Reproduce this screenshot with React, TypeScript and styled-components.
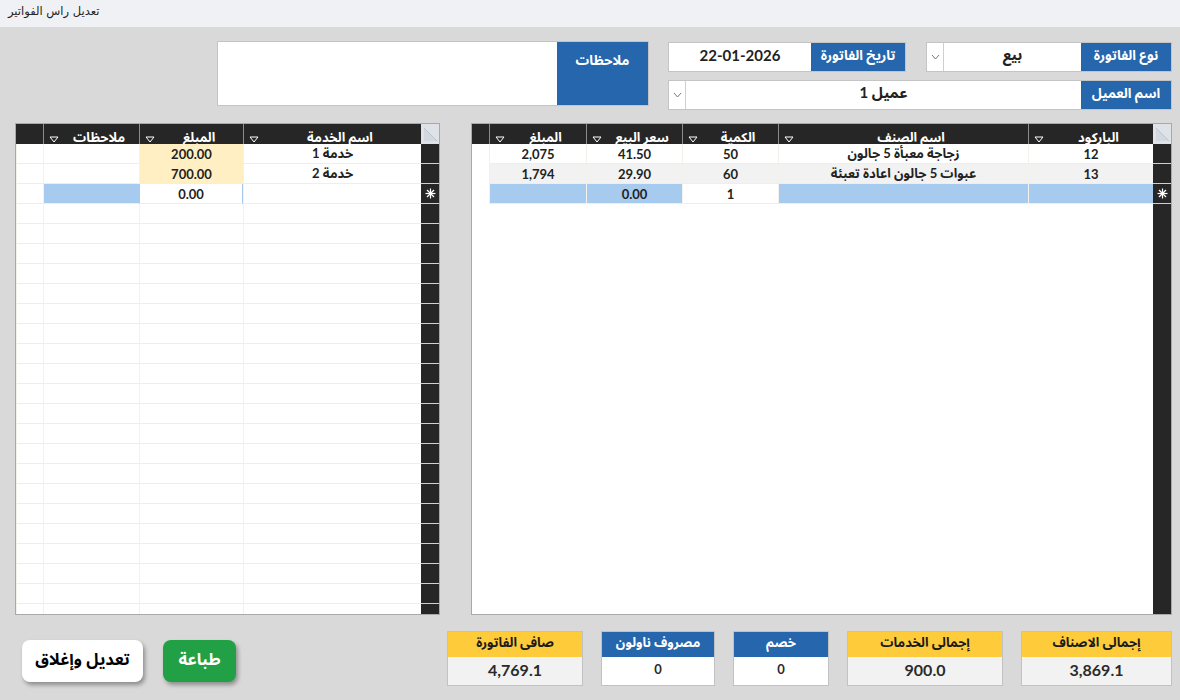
import React from "react";
import styled, { createGlobalStyle } from "styled-components";

const GlobalStyle = createGlobalStyle`
  html, body {
    margin: 0;
    padding: 0;
    background: #d9d9d9;
  }
  body {
    font-family: Lato, "Noto Sans Arabic", "DejaVu Sans", sans-serif;
  }
  * {
    box-sizing: border-box;
  }
`;

const BLUE = "#2566ad";
const YELLOW = "#fecb3b";
const ROW_BLUE = "#a6cbee";
const DARK = "#262626";

// ---------- layout ----------
const Screen = styled.div`
  width: 1180px;
  height: 700px;
  background: #d9d9d9;
  overflow: hidden;
  display: flex;
  flex-direction: column;
`;

const TitleBar = styled.div`
  height: 27px;
  flex: none;
  background: #f0f1f5;
  padding: 4px 8px 0;
  font-family: "DejaVu Sans", sans-serif;
  font-size: 11.5px;
  color: #222;
  direction: ltr;
`;

const Body = styled.div`
  direction: rtl;
  flex: 1;
  display: flex;
  flex-direction: column;
  padding: 14px 8px 0 15px;
`;

const TopSection = styled.div`
  display: flex;
  gap: 19px;
  align-items: flex-start;
  height: 68px;
`;

const FieldsColumn = styled.div`
  width: 504px;
  margin-top: 1px;
  display: flex;
  flex-direction: column;
  gap: 8px;
`;

const FieldRow = styled.div`
  display: flex;
  gap: 20px;
`;

const FieldGroup = styled.div<{ $w?: number; $h?: number }>`
  display: flex;
  width: ${(p) => (p.$w ? `${p.$w}px` : "100%")};
  height: ${(p) => p.$h ?? 30}px;
  border: 1px solid #c4c4c4;
  background: #fff;
`;

const FieldLabel = styled.div<{ $w: number; $top?: boolean }>`
  width: ${(p) => p.$w}px;
  flex: none;
  background: ${BLUE};
  color: #fff;
  font-weight: 700;
  font-size: 13.5px;
  display: flex;
  justify-content: center;
  align-items: ${(p) => (p.$top ? "flex-start" : "center")};
  padding-top: ${(p) => (p.$top ? "4px" : "0")};
  padding-bottom: ${(p) => (p.$top ? "0" : "3px")};
`;

const FieldValue = styled.div`
  flex: 1;
  display: flex;
  justify-content: center;
  align-items: center;
  padding-bottom: 5px;
  font-weight: 700;
  font-size: 15px;
  color: #222;
`;

const ArrowBox = styled.div`
  width: 17px;
  flex: none;
  border-right: 1px solid #cfcfcf;
  display: flex;
  align-items: center;
  justify-content: center;
`;

const NotesArea = styled.div`
  flex: 1;
  background: #fff;
`;

// ---------- tables ----------
const TablesSection = styled.div`
  display: flex;
  gap: 31px;
  height: 492px;
  margin-top: 14px;
`;

const TableFrame = styled.div<{ $w: number }>`
  width: ${(p) => p.$w}px;
  height: 100%;
  border: 1px solid #a9a9a9;
  background: #fff;
  display: flex;
  flex-direction: column;
  overflow: hidden;
`;

const HeadRow = styled.div`
  display: flex;
  height: 20px;
  flex: none;
  background: ${DARK};
`;

const Corner = styled.div`
  width: 18px;
  flex: none;
  background: #dfe3e8;
  display: flex;
  align-items: center;
  justify-content: center;
`;

const Grid = styled.div<{ $cols: string }>`
  display: grid;
  grid-template-columns: ${(p) => p.$cols};
`;

const HeadGrid = styled(Grid)`
  flex: 1;
`;

const RowGrid = styled(Grid)`
  flex: none;
  height: 20px;
`;

const HeadCell = styled.div`
  display: flex;
  align-items: center;
  padding-left: 5px;
  border-left: 1px solid #8c8c8c;
  color: #fff;
  font-weight: 700;
  font-size: 13px;
  span {
    flex: 1;
    text-align: center;
    padding-bottom: 2px;
  }
`;

const TableBody = styled.div`
  flex: 1;
  display: flex;
  min-height: 0;
`;

const SelectorCol = styled.div`
  width: 18px;
  flex: none;
  background: ${DARK};
  display: flex;
  flex-direction: column;
`;

const SelectorCell = styled.div`
  height: 20px;
  flex: none;
  border-bottom: 1px solid #d0d0d0;
  display: flex;
  align-items: center;
  justify-content: center;
`;

const Rows = styled.div`
  flex: 1;
  display: flex;
  flex-direction: column;
`;

const Cell = styled.div<{ $bg?: string; $plain?: boolean; $edge?: string }>`
  height: 20px;
  background: ${(p) => p.$bg ?? "#fff"};
  border-bottom: 1px solid ${(p) => (p.$plain ? "transparent" : "#efeee7")};
  border-left: 1px solid ${(p) => (p.$plain ? "transparent" : p.$edge ?? "#f2f1ec")};
  border-right: ${(p) => (p.$edge ? `1px solid ${p.$edge}` : "none")};
  display: flex;
  align-items: center;
  justify-content: center;
  font-weight: 700;
  font-size: 13px;
  color: #222;
  padding-top: 1px;
  white-space: nowrap;
  overflow: hidden;
`;

// ---------- bottom ----------
const BottomSection = styled.div`
  display: flex;
  justify-content: space-between;
  align-items: flex-start;
  margin-top: 16px;
`;

const Summary = styled.div`
  display: flex;
  gap: 18px;
`;

const SumBox = styled.div<{ $w: number }>`
  width: ${(p) => p.$w}px;
  border: 1px solid #c2c2c2;
  display: flex;
  flex-direction: column;
`;

const SumHead = styled.div<{ $blue?: boolean }>`
  height: 25px;
  background: ${(p) => (p.$blue ? BLUE : YELLOW)};
  color: ${(p) => (p.$blue ? "#fff" : "#1a1a1a")};
  font-weight: 700;
  font-size: 13px;
  display: flex;
  align-items: center;
  justify-content: center;
  padding-bottom: 3px;
`;

const SumValue = styled.div<{ $blue?: boolean }>`
  height: 28px;
  background: ${(p) => (p.$blue ? "#fff" : "#f2f2f2")};
  color: #2a2a2a;
  font-weight: 700;
  font-size: ${(p) => (p.$blue ? 13 : 16)}px;
  display: flex;
  align-items: ${(p) => (p.$blue ? "flex-start" : "center")};
  padding-top: ${(p) => (p.$blue ? "4px" : "0")};
  padding-bottom: ${(p) => (p.$blue ? "0" : "3px")};
  justify-content: center;
`;

const Buttons = styled.div`
  display: flex;
  gap: 20px;
  margin-top: 9px;
  margin-left: 7px;
`;

const ActionButton = styled.button<{ $green?: boolean; $w: number }>`
  width: ${(p) => p.$w}px;
  height: 42px;
  border: none;
  border-radius: 8px;
  background: ${(p) => (p.$green ? "#22a045" : "#fff")};
  color: ${(p) => (p.$green ? "#fff" : "#000")};
  box-shadow: 2px 3px 4px rgba(0, 0, 0, 0.35);
  font-family: "Noto Sans Arabic", "DejaVu Sans", sans-serif;
  font-weight: 700;
  font-size: 16.5px;
  padding: 0 0 3px;
  cursor: pointer;
`;

// ---------- icons ----------
const Chevron = () => (
  <svg width="9" height="6" viewBox="0 0 9 6">
    <polyline points="1,1 4.5,5 8,1" fill="none" stroke="#777" strokeWidth="1" />
  </svg>
);

const FilterArrow = () => (
  <svg width="10" height="7" viewBox="0 0 10 7">
    <polygon points="1,1 9,1 5,6" fill="none" stroke="#fff" strokeWidth="1" />
  </svg>
);

const CornerMark = () => (
  <svg width="16" height="16" viewBox="0 0 16 16">
    <polygon points="2,2 15,15 2,15" fill="#d2d8e0" />
    <line x1="2" y1="2" x2="15" y2="15" stroke="#bcc6d2" strokeWidth="1" />
  </svg>
);

const Star = () => (
  <svg width="11" height="11" viewBox="0 0 11 11">
    <g stroke="#fff" strokeWidth="1.2">
      <line x1="5.5" y1="0.5" x2="5.5" y2="10.5" />
      <line x1="0.5" y1="5.5" x2="10.5" y2="5.5" />
      <line x1="2" y1="2" x2="9" y2="9" />
      <line x1="9" y1="2" x2="2" y2="9" />
    </g>
  </svg>
);

// ---------- data ----------
const ITEM_COLS = "125px 250px 96px 96px 97px 1fr";
const SERVICE_COLS = "178px 104px 96px 1fr";

const itemHeads = ["الباركود", "اسم الصنف", "الكمية", "سعر البيع", "المبلغ"];
const serviceHeads = ["اسم الخدمة", "المبلغ", "ملاحظات"];

const items = [
  { code: "12", name: "زجاجة معبأة 5 جالون", qty: "50", price: "41.50", amount: "2,075" },
  { code: "13", name: "عبوات 5 جالون اعادة تعبئة", qty: "60", price: "29.90", amount: "1,794" },
];

const services = [
  { name: "خدمة 1", amount: "200.00" },
  { name: "خدمة 2", amount: "700.00" },
];

const totals = [
  { label: "إجمالى الاصناف", value: "3,869.1", w: 151 },
  { label: "إجمالى الخدمات", value: "900.0", w: 156 },
  { label: "خصم", value: "0", w: 96, blue: true },
  { label: "مصروف ناولون", value: "0", w: 114, blue: true },
  { label: "صافى الفاتورة", value: "4,769.1", w: 136 },
];

const EMPTY_ROWS = 21;

const TableHead: React.FC<{ cols: string; heads: string[] }> = ({ cols, heads }) => (
  <HeadRow>
    <Corner>
      <CornerMark />
    </Corner>
    <HeadGrid $cols={cols}>
      {heads.map((h) => (
        <HeadCell key={h}>
          <span>{h}</span>
          <FilterArrow />
        </HeadCell>
      ))}
      <div />
    </HeadGrid>
  </HeadRow>
);

export default function App() {
  return (
    <>
      <GlobalStyle />
      <Screen>
        <TitleBar>تعديل راس الفواتير</TitleBar>
        <Body>
          <TopSection>
            <FieldsColumn>
              <FieldRow>
                <FieldGroup $w={246}>
                  <FieldLabel $w={90}>نوع الفاتورة</FieldLabel>
                  <FieldValue>بيع</FieldValue>
                  <ArrowBox>
                    <Chevron />
                  </ArrowBox>
                </FieldGroup>
                <FieldGroup $w={238}>
                  <FieldLabel $w={94}>تاريخ الفاتورة</FieldLabel>
                  <FieldValue>22-01-2026</FieldValue>
                </FieldGroup>
              </FieldRow>
              <FieldGroup>
                <FieldLabel $w={90}>اسم العميل</FieldLabel>
                <FieldValue>عميل 1</FieldValue>
                <ArrowBox>
                  <Chevron />
                </ArrowBox>
              </FieldGroup>
            </FieldsColumn>
            <FieldGroup $w={432} $h={65}>
              <FieldLabel $w={91} $top>
                ملاحظات
              </FieldLabel>
              <NotesArea />
            </FieldGroup>
          </TopSection>

          <TablesSection>
            <TableFrame $w={701}>
              <TableHead cols={ITEM_COLS} heads={itemHeads} />
              <TableBody>
                <SelectorCol>
                  <SelectorCell />
                  <SelectorCell />
                  <SelectorCell>
                    <Star />
                  </SelectorCell>
                </SelectorCol>
                <Rows>
                  {items.map((it, i) => {
                    const bg = i % 2 ? "#f2f2f2" : "#fff";
                    return (
                      <RowGrid key={it.code} $cols={ITEM_COLS}>
                        <Cell $bg={bg}>{it.code}</Cell>
                        <Cell $bg={bg}>{it.name}</Cell>
                        <Cell $bg={bg}>{it.qty}</Cell>
                        <Cell $bg={bg}>{it.price}</Cell>
                        <Cell $bg={bg}>{it.amount}</Cell>
                        <Cell $plain />
                      </RowGrid>
                    );
                  })}
                  <RowGrid $cols={ITEM_COLS}>
                    <Cell $bg={ROW_BLUE} />
                    <Cell $bg={ROW_BLUE} />
                    <Cell>1</Cell>
                    <Cell $bg={ROW_BLUE}>0.00</Cell>
                    <Cell $bg={ROW_BLUE} />
                    <Cell $plain />
                  </RowGrid>
                </Rows>
              </TableBody>
            </TableFrame>

            <TableFrame $w={425}>
              <TableHead cols={SERVICE_COLS} heads={serviceHeads} />
              <TableBody>
                <SelectorCol>
                  <SelectorCell />
                  <SelectorCell />
                  <SelectorCell>
                    <Star />
                  </SelectorCell>
                  {Array.from({ length: EMPTY_ROWS }).map((_, i) => (
                    <SelectorCell key={i} />
                  ))}
                </SelectorCol>
                <Rows>
                  {services.map((s) => (
                    <RowGrid key={s.name} $cols={SERVICE_COLS}>
                      <Cell>{s.name}</Cell>
                      <Cell $bg="#ffefc2">{s.amount}</Cell>
                      <Cell />
                      <Cell />
                    </RowGrid>
                  ))}
                  <RowGrid $cols={SERVICE_COLS}>
                    <Cell />
                    <Cell $edge={ROW_BLUE}>0.00</Cell>
                    <Cell $bg={ROW_BLUE} />
                    <Cell />
                  </RowGrid>
                  {Array.from({ length: EMPTY_ROWS }).map((_, i) => (
                    <RowGrid key={i} $cols={SERVICE_COLS}>
                      <Cell />
                      <Cell />
                      <Cell />
                      <Cell />
                    </RowGrid>
                  ))}
                </Rows>
              </TableBody>
            </TableFrame>
          </TablesSection>

          <BottomSection>
            <Summary>
              {totals.map((t) => (
                <SumBox key={t.label} $w={t.w}>
                  <SumHead $blue={t.blue}>{t.label}</SumHead>
                  <SumValue $blue={t.blue}>{t.value}</SumValue>
                </SumBox>
              ))}
            </Summary>
            <Buttons>
              <ActionButton $green $w={73}>
                طباعة
              </ActionButton>
              <ActionButton $w={121}>تعديل وإغلاق</ActionButton>
            </Buttons>
          </BottomSection>
        </Body>
      </Screen>
    </>
  );
}
